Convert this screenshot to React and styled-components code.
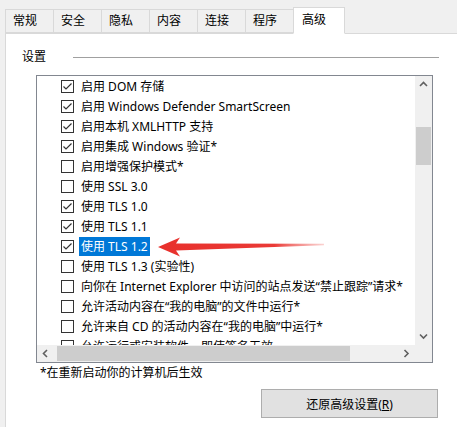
import React from "react";
import styled, { createGlobalStyle } from "styled-components";

const GlobalStyle = createGlobalStyle`
  html, body { margin: 0; padding: 0; background: #f0f0f0; }
  body {
    font-family: "Noto Sans", "Noto Sans CJK SC", sans-serif;
    font-size: 12px;
    color: #000;
  }
`;

const Page = styled.div`
  position: relative;
  width: 457px;
  height: 427px;
  overflow: hidden;
  background: #f0f0f0;
  display: flex;
  flex-direction: column;
`;

const TabStrip = styled.div`
  display: flex;
  align-items: flex-end;
  height: 34px;
  padding-left: 5px;
  margin-bottom: -1px;
  position: relative;
  z-index: 1;
`;

const Tab = styled.div`
  box-sizing: border-box;
  width: ${(p) => (p.$active ? "52px" : "49px")};
  height: ${(p) => (p.$active ? "27px" : "24px")};
  margin-right: -1px;
  padding-left: ${(p) => (p.$active ? "8px" : "7px")};
  padding-top: ${(p) => (p.$active ? "4px" : "3px")};
  border: 1px solid #d9d9d9;
  border-bottom: ${(p) => (p.$active ? "1px solid #fff" : "1px solid #d9d9d9")};
  background: ${(p) => (p.$active ? "#fff" : "#f0f0f0")};
  line-height: 16px;
  position: relative;
  z-index: ${(p) => (p.$active ? 2 : 1)};
  margin-bottom: ${(p) => (p.$active ? "0" : "1px")};
`;

const Panel = styled.div`
  flex: 1;
  margin-left: 5px;
  background: #fff;
  border-left: 1px solid #d9d9d9;
  border-top: 1px solid #d9d9d9;
  display: flex;
  flex-direction: column;
  padding-top: 15px;
`;

const GroupHeader = styled.div`
  display: flex;
  align-items: center;
  height: 16px;
  padding-left: 16px;
  line-height: 16px;
`;

const GroupRule = styled.div`
  margin-left: 27px;
  width: 366px;
  height: 1px;
  background: #a0a0a0;
`;

const ListBox = styled.div`
  box-sizing: border-box;
  margin-top: 10px;
  margin-left: 30px;
  width: 397px;
  height: 288px;
  border: 1px solid #828790;
  display: grid;
  grid-template-columns: 1fr 17px;
  grid-template-rows: 1fr 17px;
`;

const ListContent = styled.div`
  overflow: hidden;
`;

const Row = styled.div`
  display: flex;
  align-items: center;
  height: 20px;
  padding-left: 24px;
  white-space: nowrap;
`;

const Box = styled.span`
  box-sizing: border-box;
  width: 13px;
  height: 13px;
  border: 1px solid #333;
  background: #fff;
  flex: none;
  margin-right: 5px;
  display: flex;
  align-items: center;
  justify-content: center;
`;

const Label = styled.span`
  height: 19px;
  line-height: 19px;
  padding: 0 2px;
  background: ${(p) => (p.$selected ? "#0078d7" : "transparent")};
  color: ${(p) => (p.$selected ? "#fff" : "#000")};
`;

const VScroll = styled.div`
  background: #f0f0f0;
  display: flex;
  flex-direction: column;
`;

const HScroll = styled.div`
  background: #f0f0f0;
  display: flex;
`;

const ArrowBtn = styled.div`
  width: 17px;
  height: 17px;
  flex: none;
  display: flex;
  align-items: center;
  justify-content: center;
`;

const VTrack = styled.div`
  flex: 1;
  padding-top: 34px;
`;

const VThumb = styled.div`
  width: 15px;
  margin-left: 1px;
  height: 38px;
  background: #cdcdcd;
`;

const HTrack = styled.div`
  flex: 1;
  padding-left: 3px;
  display: flex;
  align-items: center;
`;

const HThumb = styled.div`
  height: 15px;
  width: 293px;
  background: #cdcdcd;
`;

const Corner = styled.div`
  background: #f0f0f0;
`;

const Hint = styled.div`
  margin-top: 2px;
  margin-left: 34px;
  line-height: 16px;
`;

const ResetButton = styled.button`
  box-sizing: border-box;
  margin-top: 8px;
  margin-left: 255px;
  width: 177px;
  height: 29px;
  background: #e1e1e1;
  border: 1px solid #adadad;
  font: inherit;
  color: #000;
  padding: 0;
  & u { text-decoration: underline; }
`;

const Overlay = styled.svg`
  position: absolute;
  left: 0;
  top: 0;
  pointer-events: none;
`;

const Chevron = ({ dir }) => {
  const paths = {
    up: "M1 5 L4.5 1.5 L8 5",
    down: "M1 1.5 L4.5 5 L8 1.5",
    left: "M5 1 L1.5 4.5 L5 8",
    right: "M1.5 1 L5 4.5 L1.5 8",
  };
  const vertical = dir === "up" || dir === "down";
  return (
    <svg width={vertical ? 9 : 7} height={vertical ? 7 : 9} viewBox={vertical ? "0 0 9 7" : "0 0 7 9"}>
      <path d={paths[dir]} fill="none" stroke="#606060" strokeWidth="1.6" />
    </svg>
  );
};

const Check = () => (
  <svg width="11" height="11" viewBox="0 0 11 11">
    <path d="M1.5 5.5 L4 8 L9.5 2.5" fill="none" stroke="#333" strokeWidth="1.2" />
  </svg>
);

const items = [
  { t: "启用 DOM 存储", c: true },
  { t: "启用 Windows Defender SmartScreen", c: true },
  { t: "启用本机 XMLHTTP 支持", c: true },
  { t: "启用集成 Windows 验证*", c: true },
  { t: "启用增强保护模式*", c: false },
  { t: "使用 SSL 3.0", c: false },
  { t: "使用 TLS 1.0", c: true },
  { t: "使用 TLS 1.1", c: true },
  { t: "使用 TLS 1.2", c: true, s: true },
  { t: "使用 TLS 1.3 (实验性)", c: false },
  { t: "向你在 Internet Explorer 中访问的站点发送“禁止跟踪”请求*", c: false },
  { t: "允许活动内容在“我的电脑”的文件中运行*", c: false },
  { t: "允许来自 CD 的活动内容在“我的电脑”中运行*", c: false },
  { t: "允许运行或安装软件，即使签名无效", c: false },
];

const tabs = ["常规", "安全", "隐私", "内容", "连接", "程序", "高级"];

export default function App() {
  return (
    <Page>
      <GlobalStyle />
      <TabStrip>
        {tabs.map((t) => (
          <Tab key={t} $active={t === "高级"}>{t}</Tab>
        ))}
      </TabStrip>
      <Panel>
        <GroupHeader>
          设置
          <GroupRule />
        </GroupHeader>
        <ListBox>
          <ListContent>
            {items.map((it) => (
              <Row key={it.t}>
                <Box>{it.c && <Check />}</Box>
                <Label $selected={it.s}>{it.t}</Label>
              </Row>
            ))}
          </ListContent>
          <VScroll>
            <ArrowBtn><Chevron dir="up" /></ArrowBtn>
            <VTrack><VThumb /></VTrack>
            <ArrowBtn><Chevron dir="down" /></ArrowBtn>
          </VScroll>
          <HScroll>
            <ArrowBtn><Chevron dir="left" /></ArrowBtn>
            <HTrack><HThumb /></HTrack>
            <ArrowBtn><Chevron dir="right" /></ArrowBtn>
          </HScroll>
          <Corner />
        </ListBox>
        <Hint>*在重新启动你的计算机后生效</Hint>
        <ResetButton>还原高级设置(<u>R</u>)</ResetButton>
      </Panel>
      <Overlay width="457" height="427" viewBox="0 0 457 427">
        <defs>
          <linearGradient id="arrowFade" x1="158" y1="0" x2="324" y2="0" gradientUnits="userSpaceOnUse">
            <stop offset="0" stopColor="#e8302c" />
            <stop offset="0.7" stopColor="#ea3a36" />
            <stop offset="1" stopColor="#f06a66" stopOpacity="0.3" />
          </linearGradient>
        </defs>
        <polygon
          points="158,247 180,237.5 176,243.5 324,243.8 324,245.2 176,250.5 180,256.5"
          fill="url(#arrowFade)"
        />
      </Overlay>
    </Page>
  );
}
